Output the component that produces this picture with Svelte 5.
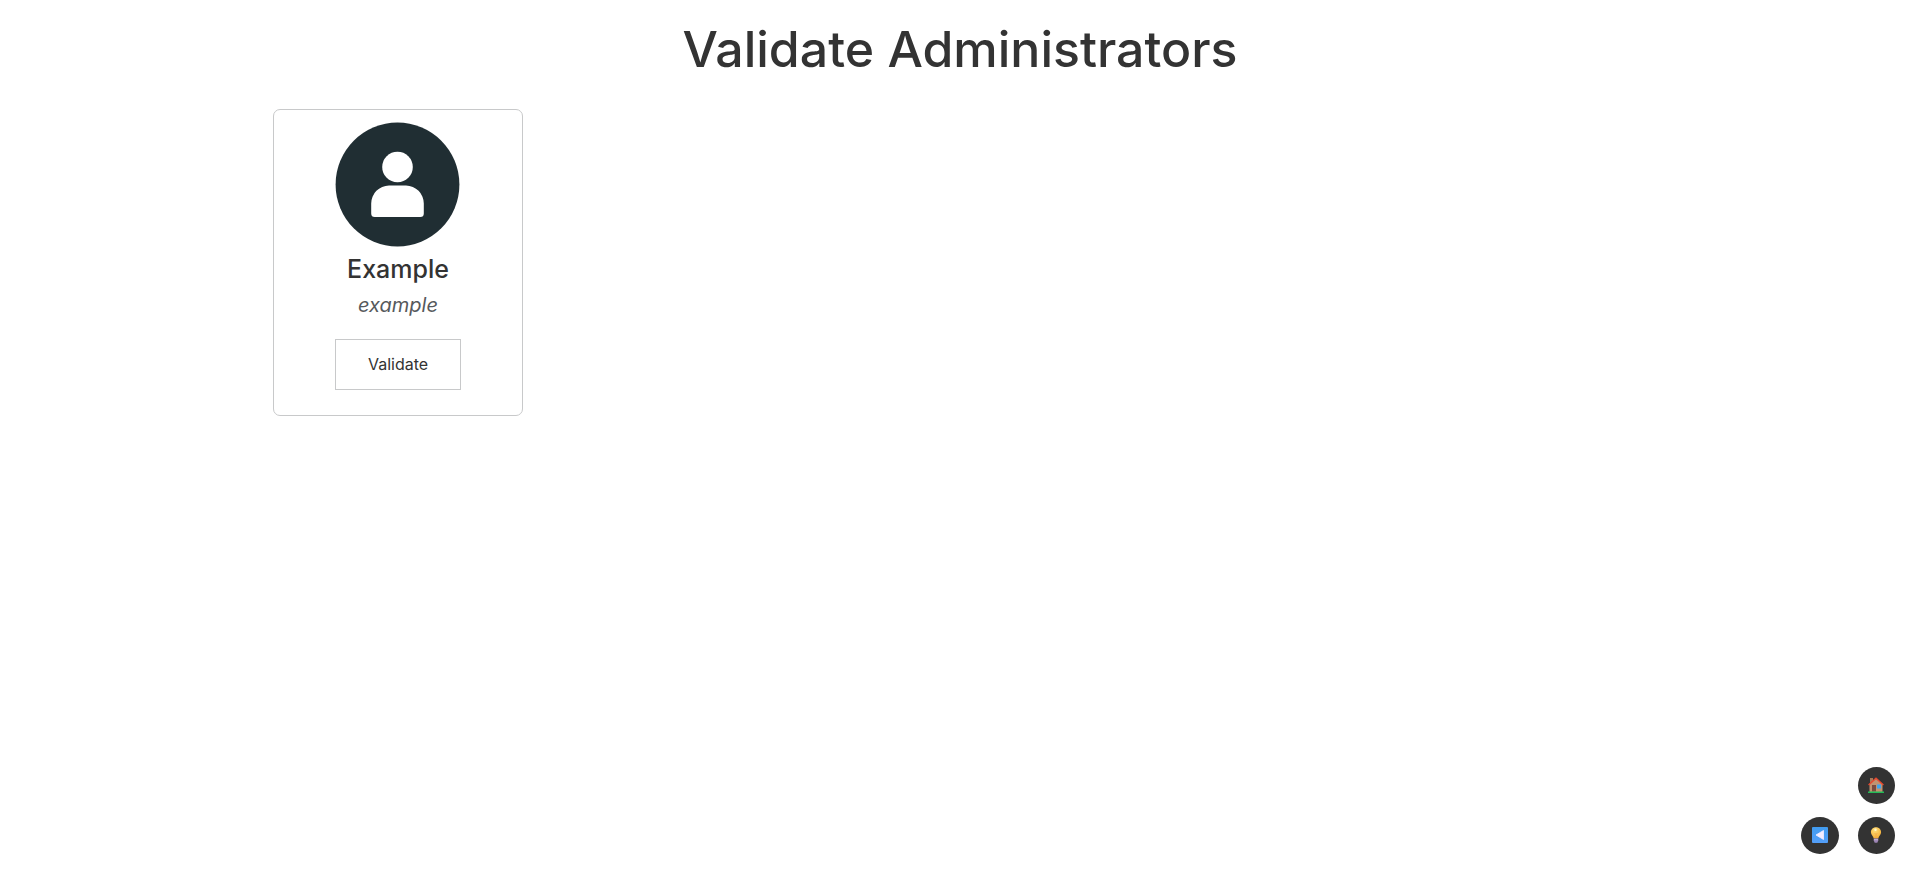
<script>
  const people = [{ name: 'Example', username: 'example' }];
</script>

<main>
  <h1>Validate Administrators</h1>
  <ul class="people">
    {#each people as person}
      <li class="card">
        <svg class="avatar" viewBox="0 0 124 124" aria-hidden="true">
          <circle cx="61.500" cy="62.500" r="61.900" fill="#202e33" />
          <circle cx="61.500" cy="45" r="15.300" fill="#fff" />
          <path d="M53 63.500H70A18 18 0 0 1 87.800 81.500V91.500A3.500 3.500 0 0 1 84.300 95H38.700A3.500 3.500 0 0 1 35.200 91.500V81.500A18 18 0 0 1 53 63.500Z" fill="#fff" />
        </svg>
        <h2>{person.name}</h2>
        <p>{person.username}</p>
        <button class="validate" type="button">Validate</button>
      </li>
    {/each}
  </ul>
</main>

<nav aria-label="Shortcuts">
  <a class="round home" href="#home" aria-label="Home">
    <svg viewBox="0 0 16 16">
      <path d="M2 1H5V6L2 8Z" fill="#a87858" />
      <path d="M1.500 7L8 1.500L14.500 7V15H1.500Z" fill="#c29370" />
      <path d="M.6 8L8 1.200L15.400 8" fill="none" stroke="#e8482f" stroke-width="1.500" />
      <rect x="4" y="8" width="4" height="6.500" fill="#7b4c40" />
      <rect x="9" y="7.500" width="4" height="4" fill="#3da5ef" />
      <rect x="0" y="14.500" width="16" height="1.500" fill="#22bb58" />
    </svg>
  </a>
  <button class="round back" type="button" aria-label="Back">
    <svg viewBox="0 0 16 16">
      <defs>
        <linearGradient id="tile" x2="0" y2="1"><stop stop-color="#419bee" /><stop offset="1" stop-color="#549ff8" /></linearGradient>
      </defs>
      <rect width="16" height="16" rx="1" fill="url(#tile)" />
      <path d="M4 8L11.500 3.500V12.500Z" fill="#f5edff" stroke="#f5edff" stroke-width=".8" stroke-linejoin="round" />
    </svg>
  </button>
  <button class="round tips" type="button" aria-label="Tips">
    <svg viewBox="0 0 16 16">
      <defs>
        <radialGradient id="glow" cx=".4" cy=".25" r=".75"><stop stop-color="#ffe07a" /><stop offset="1" stop-color="#f5ad35" /></radialGradient>
      </defs>
      <path d="M8 .2C4.900.2 2.900 2.500 2.900 5.200C2.900 7.900 5.500 8.900 5.700 11.600H10.300C10.500 8.900 13.100 7.900 13.100 5.200C13.100 2.500 11.100.2 8 .2Z" fill="url(#glow)" />
      <path d="M8 11.500V7.500L6.600 6M8 7.500L9.400 6" fill="none" stroke="#f2a445" stroke-width=".7" />
      <circle cx="7.500" cy="2.700" r="1.200" fill="#fff6cf" />
      <path d="M5.700 11.500H10.300V13.500L9.300 15.800H6.700L5.700 13.500Z" fill="#9b83b3" />
      <path d="M6 12.700H10" stroke="#d3c0dc" stroke-width=".8" />
    </svg>
  </button>
</nav>

<style>
  :global(body) {
    margin: 0;
    background: #fff;
    color: #333;
    font-family: Inter, sans-serif;
  }
  h1, h2, p, ul { margin: 0; padding: 0; }
  h1 {
    padding-top: 19px;
    font-size: 50px;
    line-height: 60px;
    font-weight: 500;
    text-align: center;
  }
  .people {
    width: 1374px;
    max-width: 90%;
    margin: 30px auto 0;
    display: flex;
    flex-wrap: wrap;
    gap: 24px;
    list-style: none;
  }
  .card {
    box-sizing: border-box;
    width: 250px;
    padding: 12px 12px 25px;
    display: flex;
    flex-direction: column;
    align-items: center;
    border: 1px solid #c8c9ca;
    border-radius: 7px;
  }
  .avatar { width: 124px; height: 124px; overflow: visible; }
  h2 {
    margin-top: 7px;
    font-size: 25px;
    line-height: 32px;
    font-weight: 500;
  }
  p {
    margin-top: 8px;
    color: #56595c;
    font-size: 20px;
    line-height: 24px;
    font-style: oblique 12deg;
  }
  .validate {
    margin-top: 22px;
    padding: 14px 32px 15px;
    border: 1px solid #c8c9ca;
    background: transparent;
    color: #333;
    font: 16px/20px Inter, sans-serif;
  }
  nav {
    position: fixed;
    right: 25px;
    bottom: 24px;
    display: grid;
    grid-template: "none home" "back tips";
    gap: 13px 19px;
  }
  .round {
    box-sizing: border-box;
    width: 37px;
    height: 37px;
    padding: 0 1px 1px 0;
    display: grid;
    place-items: center;
    border: 0;
    border-radius: 50%;
    background: #333;
  }
  .round svg { width: 16px; height: 16px; }
  .home { grid-area: home; }
  .back { grid-area: back; width: 38px; padding-right: 0; }
  .tips { grid-area: tips; }
</style>
